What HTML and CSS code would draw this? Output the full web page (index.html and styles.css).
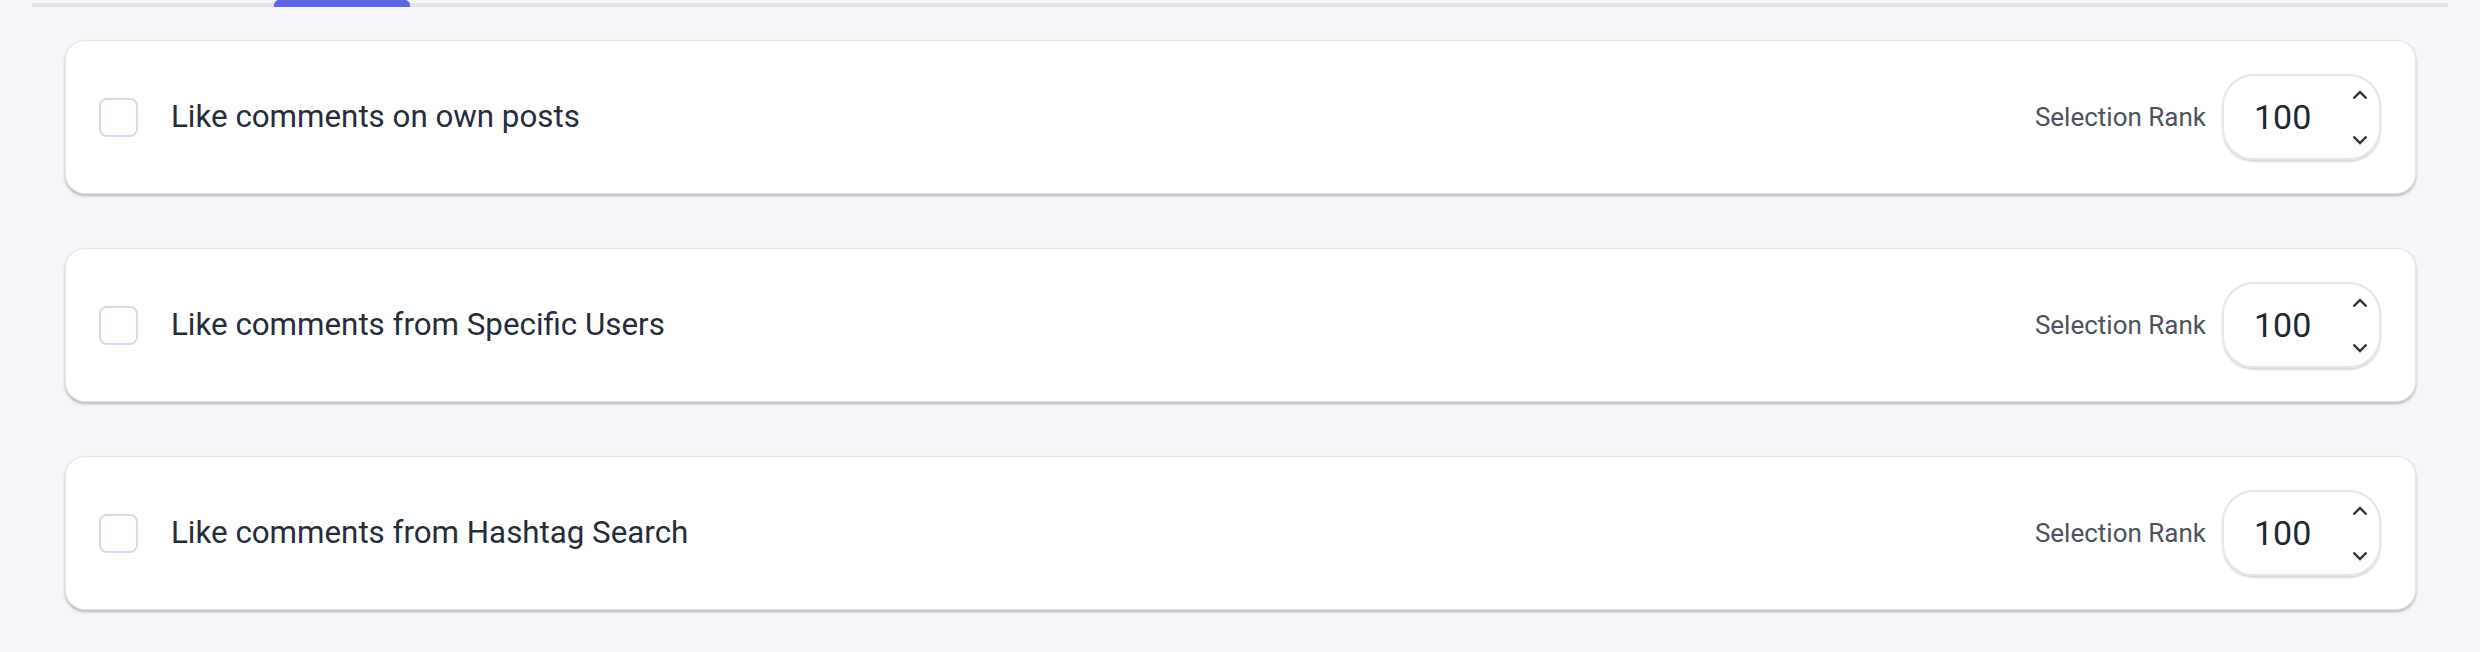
FILE: index.html
```html
<!DOCTYPE html>
<html lang="en">
<head>
    <meta charset="UTF-8">
    <meta name="viewport" content="width=device-width, initial-scale=1.0">
    <title>Comment Likes</title>
    <link rel="stylesheet" href="styles.css">
</head>
<body>
    <div class="tab-bar">
        <div class="tab-active"></div>
    </div>

    <div class="option-list">
        <div class="option-card">
            <input type="checkbox" class="option-check">
            <span class="option-label">Like comments on own posts</span>
            <span class="rank-label">Selection Rank</span>
            <div class="rank-input">
                <span class="rank-value">100</span>
                <div class="rank-arrows">
                    <svg width="16" height="10" viewBox="0 0 16 10"><polyline points="1.5,8.5 8,2 14.5,8.5"/></svg>
                    <svg width="16" height="10" viewBox="0 0 16 10"><polyline points="1.5,1.5 8,8 14.5,1.5"/></svg>
                </div>
            </div>
        </div>

        <div class="option-card">
            <input type="checkbox" class="option-check">
            <span class="option-label">Like comments from Specific Users</span>
            <span class="rank-label">Selection Rank</span>
            <div class="rank-input">
                <span class="rank-value">100</span>
                <div class="rank-arrows">
                    <svg width="16" height="10" viewBox="0 0 16 10"><polyline points="1.5,8.5 8,2 14.5,8.5"/></svg>
                    <svg width="16" height="10" viewBox="0 0 16 10"><polyline points="1.5,1.5 8,8 14.5,1.5"/></svg>
                </div>
            </div>
        </div>

        <div class="option-card">
            <input type="checkbox" class="option-check">
            <span class="option-label">Like comments from Hashtag Search</span>
            <span class="rank-label">Selection Rank</span>
            <div class="rank-input">
                <span class="rank-value">100</span>
                <div class="rank-arrows">
                    <svg width="16" height="10" viewBox="0 0 16 10"><polyline points="1.5,8.5 8,2 14.5,8.5"/></svg>
                    <svg width="16" height="10" viewBox="0 0 16 10"><polyline points="1.5,1.5 8,8 14.5,1.5"/></svg>
                </div>
            </div>
        </div>
    </div>
</body>
</html>
```

FILE: styles.css
```css
body {
    font-family: Roboto, "Noto Sans", sans-serif;
    background: #f5f6fa;
    color: #252b3b;
    margin: 0;
    min-height: 100vh;
}

.tab-bar {
    display: flex;
    align-items: flex-end;
    height: 3px;
    margin: 0 32px;
    border-bottom: 4px solid #dfe2e9;
}

.tab-active {
    width: 136px;
    height: 7px;
    margin-left: 242px;
    margin-bottom: -4px;
    background: #5a66e6;
    border-radius: 5px 5px 0 0;
}

.option-list {
    display: flex;
    flex-direction: column;
    gap: 54px;
    padding: 33px 64px 0 65px;
}

.option-card {
    display: flex;
    align-items: center;
    height: 154px;
    box-sizing: border-box;
    padding: 0 34px 0 33px;
    background: #fff;
    border: 1px solid #e4e7ee;
    border-radius: 20px;
    box-shadow: 0 2px 3px rgba(0, 0, 0, 0.25);
}

.option-check {
    appearance: none;
    width: 39px;
    height: 39px;
    margin: 0 33px 0 0;
    box-sizing: border-box;
    border: 2px solid #d6dbeb;
    border-radius: 8px;
    background: #fff;
    flex-shrink: 0;
}

.option-label {
    flex: 1;
    font-size: 31.3px;
    color: #262c3c;
    margin-top: -1px;
}

.rank-label {
    font-size: 26px;
    color: #4b5260;
    margin-right: 16px;
}

.rank-input {
    display: flex;
    align-items: center;
    width: 159px;
    height: 86px;
    box-sizing: border-box;
    padding-left: 30px;
    border: 2px solid #e2e6ee;
    border-radius: 32px;
    box-shadow: 0 2px 2px rgba(0, 0, 0, 0.16);
}

.rank-value {
    font-size: 34px;
    color: #1f2635;
}

.rank-arrows {
    display: flex;
    flex-direction: column;
    justify-content: space-between;
    height: 100%;
    box-sizing: border-box;
    padding: 14px 0 13px;
    margin-left: auto;
    margin-right: 11px;
}

.rank-arrows svg {
    display: block;
    fill: none;
    stroke: #333;
    stroke-width: 2.4;
}
```
